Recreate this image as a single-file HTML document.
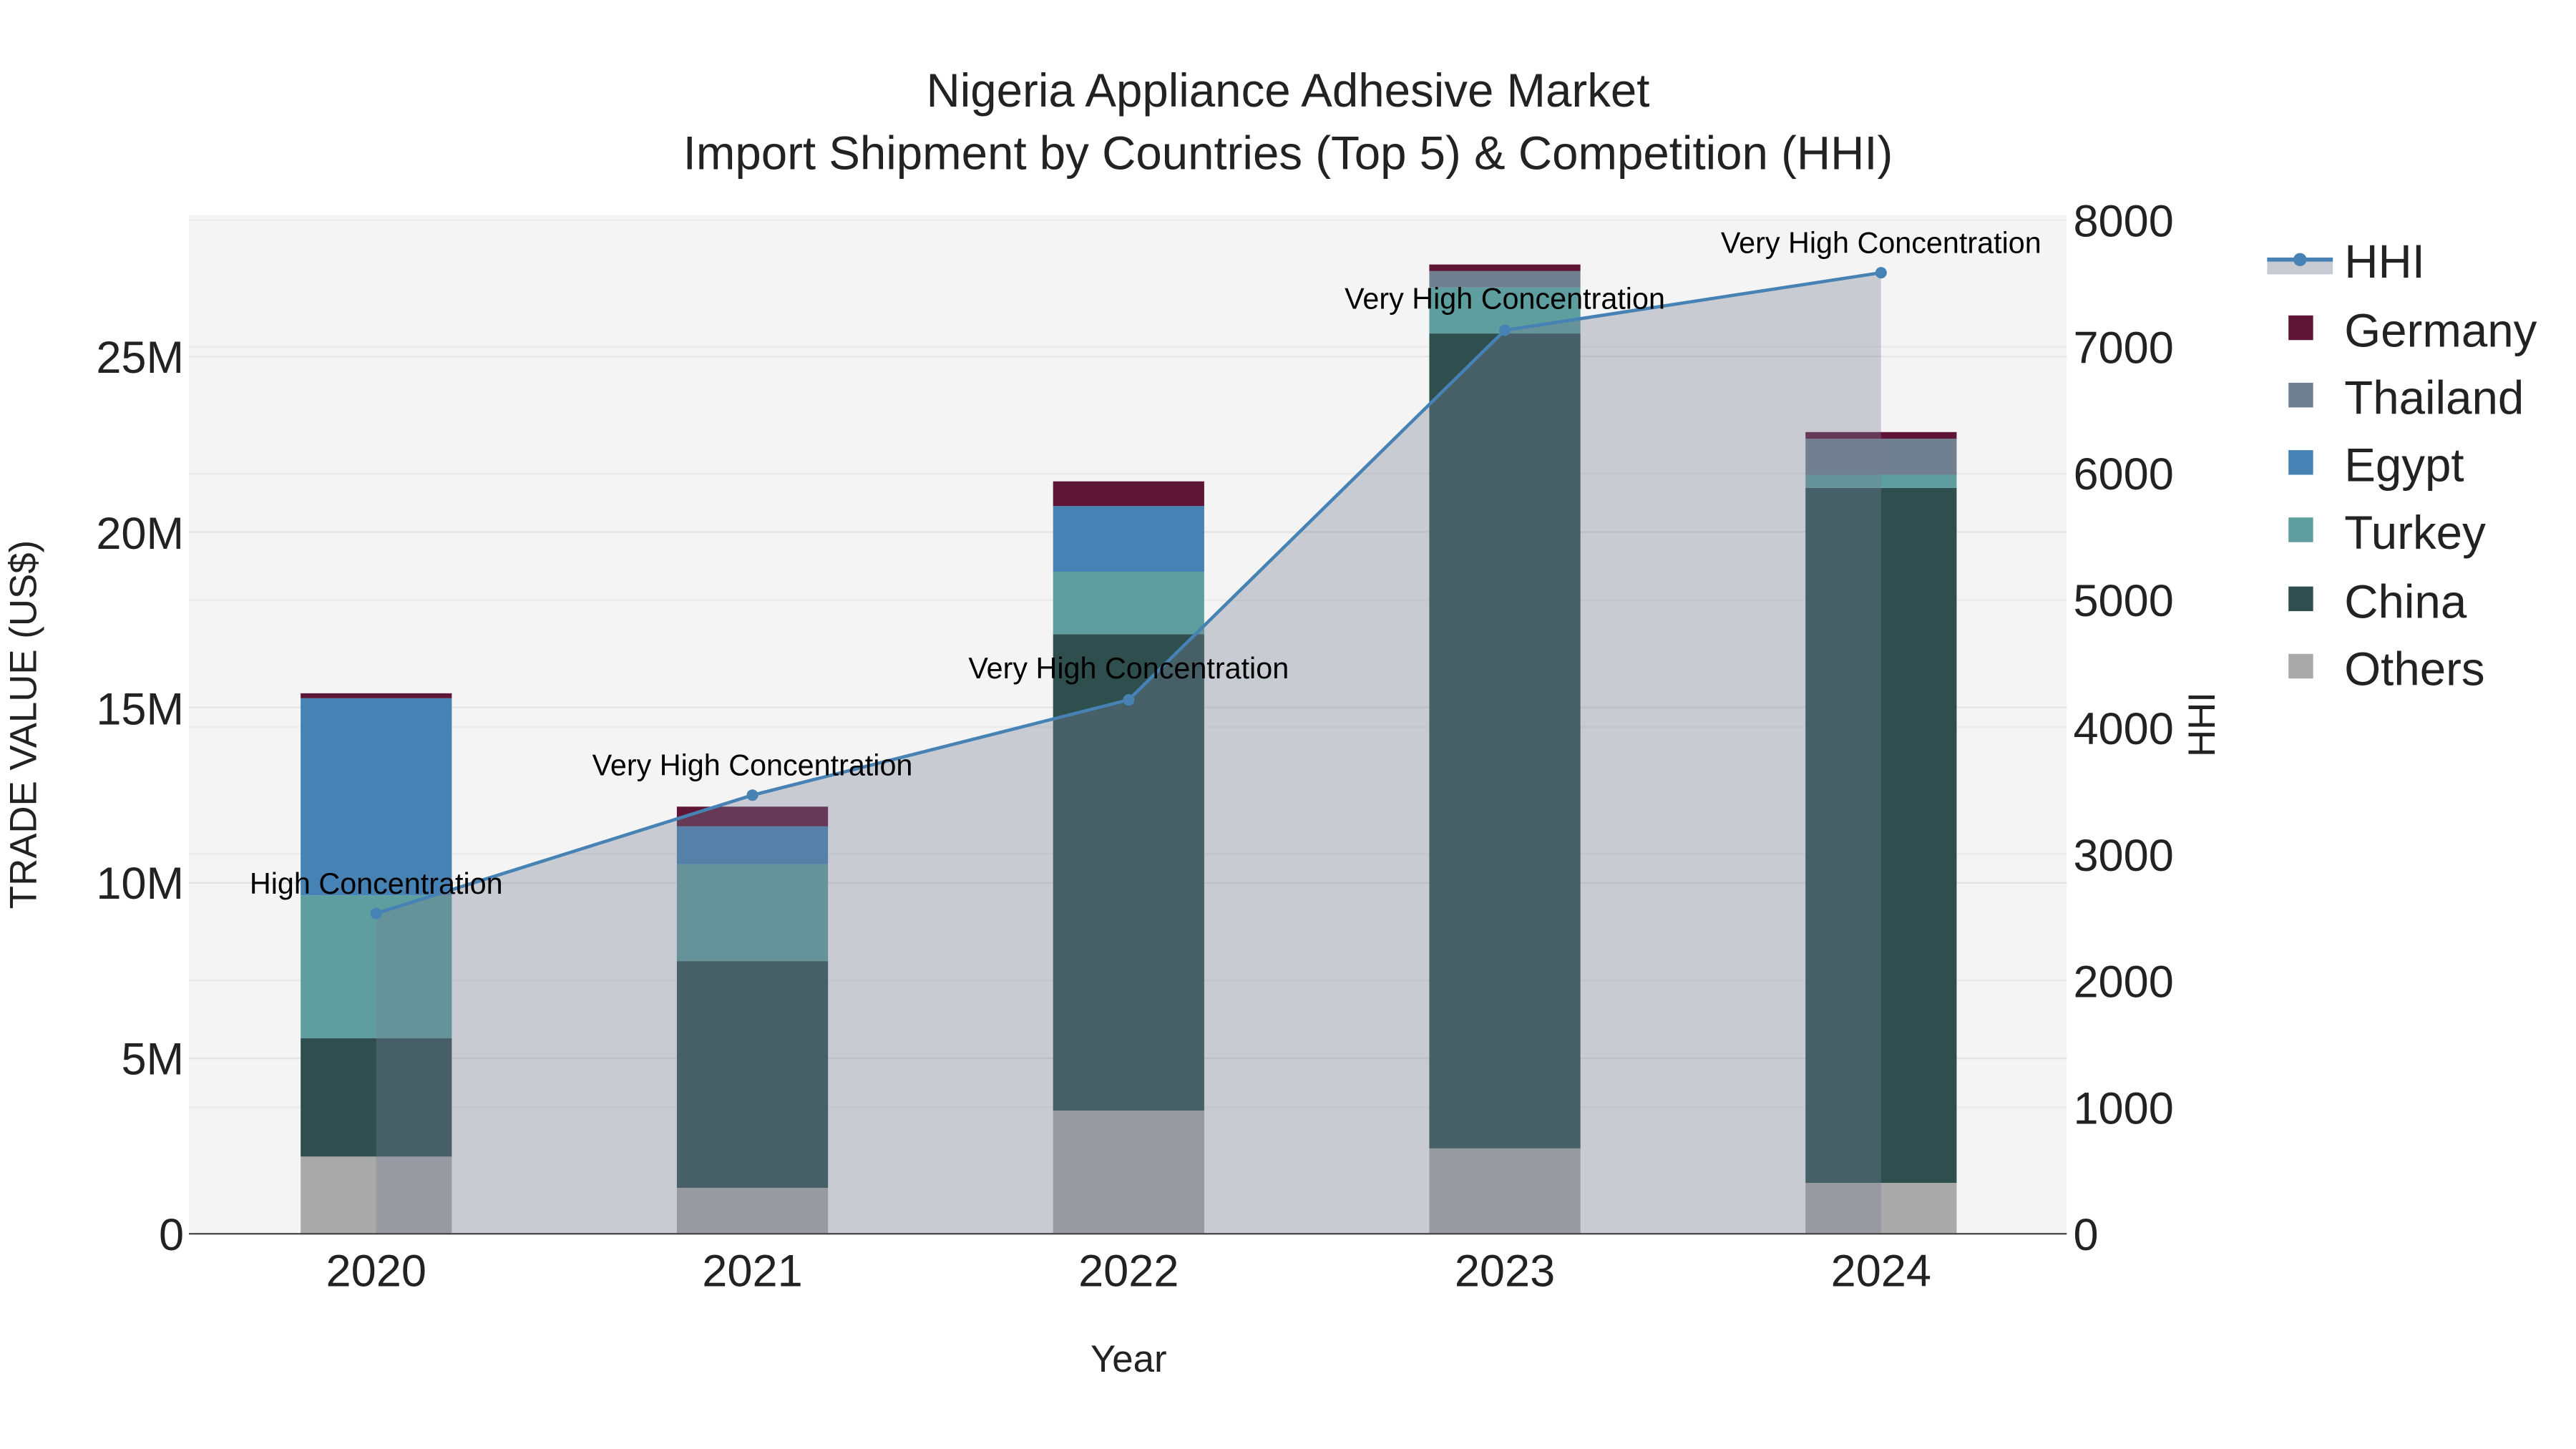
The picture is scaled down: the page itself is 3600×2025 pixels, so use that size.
<!DOCTYPE html>
<html><head><meta charset="utf-8"><style>html,body{margin:0;padding:0;background:#fff}svg{display:block}text{font-family:"Liberation Sans",sans-serif}</style></head><body>
<svg width="3600" height="2025" viewBox="0 0 1568 882" preserveAspectRatio="none" xmlns="http://www.w3.org/2000/svg">
<rect x="0" y="0" width="1568" height="882" fill="#fff"/>
<rect x="115" y="131" width="1143" height="620" fill="#f4f4f4"/>
<g stroke="#e4e4e4" stroke-width="1">
<line x1="115" x2="1258" y1="644.2" y2="644.2"/><line x1="115" x2="1258" y1="537.4" y2="537.4"/><line x1="115" x2="1258" y1="430.6" y2="430.6"/><line x1="115" x2="1258" y1="323.8" y2="323.8"/><line x1="115" x2="1258" y1="217" y2="217"/>
</g>
<g stroke="#ebebeb" stroke-width="1">
<line x1="115" x2="1258" y1="674" y2="674"/><line x1="115" x2="1258" y1="596.8" y2="596.8"/><line x1="115" x2="1258" y1="519.7" y2="519.7"/><line x1="115" x2="1258" y1="442.5" y2="442.5"/><line x1="115" x2="1258" y1="365.4" y2="365.4"/><line x1="115" x2="1258" y1="288.3" y2="288.3"/><line x1="115" x2="1258" y1="211.1" y2="211.1"/><line x1="115" x2="1258" y1="134" y2="134"/>
</g>
<g>
<rect x="183" y="704" width="92" height="47" fill="#a9a9a9"/>
<rect x="183" y="632" width="92" height="72" fill="#2f4f4f"/>
<rect x="183" y="545" width="92" height="87" fill="#5f9e9e"/>
<rect x="183" y="425" width="92" height="120" fill="#4682b4"/>
<rect x="183" y="422" width="92" height="3" fill="#5e1536"/>

<rect x="412" y="723" width="92" height="28" fill="#a9a9a9"/>
<rect x="412" y="585" width="92" height="138" fill="#2f4f4f"/>
<rect x="412" y="526" width="92" height="59" fill="#5f9e9e"/>
<rect x="412" y="503" width="92" height="23" fill="#4682b4"/>
<rect x="412" y="491" width="92" height="12" fill="#5e1536"/>

<rect x="641" y="676" width="92" height="75" fill="#a9a9a9"/>
<rect x="641" y="386" width="92" height="290" fill="#2f4f4f"/>
<rect x="641" y="348" width="92" height="38" fill="#5f9e9e"/>
<rect x="641" y="308" width="92" height="40" fill="#4682b4"/>
<rect x="641" y="293" width="92" height="15" fill="#5e1536"/>

<rect x="870" y="699" width="92" height="52" fill="#a9a9a9"/>
<rect x="870" y="203" width="92" height="496" fill="#2f4f4f"/>
<rect x="870" y="175" width="92" height="28" fill="#5f9e9e"/>
<rect x="870" y="165" width="92" height="10" fill="#708090"/>
<rect x="870" y="161" width="92" height="4" fill="#5e1536"/>

<rect x="1099" y="720" width="92" height="31" fill="#a9a9a9"/>
<rect x="1099" y="297" width="92" height="423" fill="#2f4f4f"/>
<rect x="1099" y="289" width="92" height="8" fill="#5f9e9e"/>
<rect x="1099" y="267" width="92" height="22" fill="#708090"/>
<rect x="1099" y="263" width="92" height="4" fill="#5e1536"/>
</g>
<polygon points="229,751 229,556 458,484 687,426 916,201 1145,166 1145,751" fill="rgb(118,127,147)" fill-opacity="0.35"/>
<line x1="115" x2="1258" y1="751" y2="751" stroke="#444" stroke-width="1"/>
<polyline points="229,556 458,484 687,426 916,201 1145,166" fill="none" stroke="#4682b4" stroke-width="2"/>
<g fill="#4682b4"><circle cx="229" cy="556" r="3.5"/><circle cx="458" cy="484" r="3.5"/><circle cx="687" cy="426" r="3.5"/><circle cx="916" cy="201" r="3.5"/><circle cx="1145" cy="166" r="3.5"/></g>
<g font-size="18" text-anchor="middle" fill="#000">
<text x="229" y="544">High Concentration</text>
<text x="458" y="472">Very High Concentration</text>
<text x="687" y="413">Very High Concentration</text>
<text x="916" y="188">Very High Concentration</text>
<text x="1145" y="154">Very High Concentration</text>
</g>
<g font-size="27.5" text-anchor="end" fill="#222">
<text x="112" y="761">0</text><text x="112" y="654">5M</text><text x="112" y="547">10M</text><text x="112" y="441">15M</text><text x="112" y="334">20M</text><text x="112" y="227">25M</text>
</g>
<g font-size="27.5" text-anchor="start" fill="#222">
<text x="1262" y="761">0</text><text x="1262" y="684">1000</text><text x="1262" y="607">2000</text><text x="1262" y="530">3000</text><text x="1262" y="453">4000</text><text x="1262" y="375">5000</text><text x="1262" y="298">6000</text><text x="1262" y="221">7000</text><text x="1262" y="144">8000</text>
</g>
<g font-size="27.5" text-anchor="middle" fill="#222">
<text x="229" y="783">2020</text><text x="458" y="783">2021</text><text x="687" y="783">2022</text><text x="916" y="783">2023</text><text x="1145" y="783">2024</text>
</g>
<text x="687" y="835" font-size="23" text-anchor="middle" fill="#222">Year</text>
<text transform="translate(22,441) rotate(-90)" font-size="23" text-anchor="middle" fill="#222">TRADE VALUE (US$)</text>
<text transform="translate(1348,441) rotate(-90)" font-size="23" text-anchor="middle" fill="#222">HHI</text>
<g font-size="28.5" text-anchor="middle" fill="#222">
<text x="784" y="65">Nigeria Appliance Adhesive Market</text>
<text x="784" y="103">Import Shipment by Countries (Top 5) &amp; Competition (HHI)</text>
</g>
<rect x="1380" y="159" width="40" height="8" fill="#c8cbd2"/>
<line x1="1380" x2="1420" y1="158" y2="158" stroke="#4682b4" stroke-width="2.5"/>
<circle cx="1400" cy="158" r="4" fill="#4682b4"/>
<rect x="1393" y="192" width="15" height="15" fill="#5e1536"/>
<rect x="1393" y="233" width="15" height="15" fill="#708090"/>
<rect x="1393" y="274" width="15" height="15" fill="#4682b4"/>
<rect x="1393" y="315" width="15" height="15" fill="#5f9e9e"/>
<rect x="1393" y="357" width="15" height="15" fill="#2f4f4f"/>
<rect x="1393" y="398" width="15" height="15" fill="#a9a9a9"/>
<g font-size="28.5" fill="#222">
<text x="1427" y="169">HHI</text><text x="1427" y="211">Germany</text><text x="1427" y="252">Thailand</text><text x="1427" y="293">Egypt</text><text x="1427" y="334">Turkey</text><text x="1427" y="376">China</text><text x="1427" y="417">Others</text>
</g>
</svg>
</body></html>
